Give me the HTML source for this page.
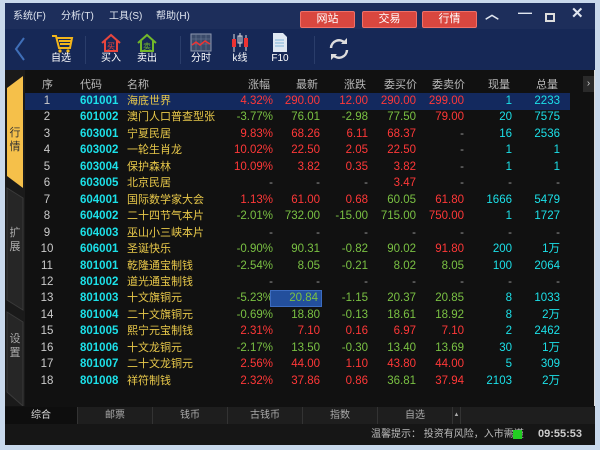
<!DOCTYPE html>
<html><head><meta charset="utf-8"><style>
*{margin:0;padding:0;box-sizing:border-box}
body{width:600px;height:450px;overflow:hidden;background:#c9d9ec;font-family:"Liberation Sans","Noto Sans CJK SC",sans-serif;position:relative}
.a{position:absolute}
#win{left:5px;top:3px;width:590px;height:442px;background:#111}
#menu{left:5px;top:3px;width:590px;height:26px;background:#1d2e5b}
#menu span{position:absolute;top:7px;font-size:10px;line-height:13px;color:#e0e6f0}
.btn{position:absolute;top:8px;height:17px;width:55px;background:#d9473f;border:1px solid #f07068;color:#fff;font-size:11px;text-align:center;line-height:15px;border-radius:2px}
#tool{left:5px;top:29px;width:590px;height:41px;background:#162856}
.tl{position:absolute;top:52px;font-size:10px;line-height:13px;color:#fff;text-align:center;width:40px}
.sep{position:absolute;top:36px;width:1px;height:28px;background:#2a3d6a}
#side{left:5px;top:70px;width:20px;height:336px;background:#1a1a1a}
.hd{position:absolute;top:78px;font-size:11px;line-height:14px;color:#b8b8b8}
.row{position:absolute;left:25px;width:545px;height:17px;font-size:11.5px}
.row span{position:absolute;top:0;line-height:17px;height:17px;white-space:nowrap}
.n{left:10px;width:24px;text-align:center;color:#ccc}
.c{left:55px;color:#1ce0e8;font-weight:bold}
.m{left:102px;color:#e8c84a;font-size:11px}
.r{color:#ff3838}.g{color:#7ac143}.y{color:#1ce0e8}.d{color:#999}
#tabs{left:5px;top:407px;width:590px;height:17px;background:#1e1e1e}
#tabs div{position:absolute;top:0;height:17px;font-size:10px;color:#aaa;text-align:center;line-height:17px;border-right:1px solid #333}
#stat{left:5px;top:424px;width:590px;height:21px;background:#161616}
</style></head><body>
<div id="win" class="a"></div>
<div id="menu" class="a">
<span style="left:8px">系统(F)</span><span style="left:56px">分析(T)</span><span style="left:104px">工具(S)</span><span style="left:151px">帮助(H)</span>
<div class="btn" style="left:295px">网站</div><div class="btn" style="left:357px">交易</div><div class="btn" style="left:417px">行情</div>
<span style="left:480px;top:5px;font-size:14px;font-weight:bold">︿</span>
<span style="left:513px;top:3px;font-size:14px;font-weight:bold">—</span>
<span style="left:540px;top:10px;width:10px;height:9px;border:2px solid #ddd"></span>
<span style="left:566px;top:4px;font-size:15px;font-weight:bold">✕</span>
</div>
<div id="tool" class="a"></div>
<svg class="a" style="left:10px;top:34px" width="20" height="30"><path d="M14 4 L6 15 L14 26" stroke="#3f6fb8" stroke-width="2" fill="none"/></svg>
<svg class="a" style="left:50px;top:33px" width="24" height="20"><path d="M2 3h4l3 12h11l2-10H7M9 8h12M10 11h10" stroke="#f2b51a" stroke-width="2" fill="none"/><circle cx="10" cy="18" r="1.6" fill="#f2b51a"/><circle cx="18" cy="18" r="1.6" fill="#f2b51a"/></svg>
<div class="tl" style="left:41px">自选</div>
<div class="sep" style="left:85px"></div>
<svg class="a" style="left:100px;top:33px" width="22" height="20"><path d="M2 10L11 2L20 10M5 8v10h12V8" stroke="#e8463e" stroke-width="2" fill="none"/><text x="11" y="16" font-size="8" fill="#e8463e" text-anchor="middle">买</text></svg>
<div class="tl" style="left:91px">买入</div>
<svg class="a" style="left:136px;top:33px" width="22" height="20"><path d="M2 10L11 2L20 10M5 8v10h12V8" stroke="#72b82a" stroke-width="2" fill="none"/><text x="11" y="16" font-size="8" fill="#72b82a" text-anchor="middle">卖</text></svg>
<div class="tl" style="left:127px">卖出</div>
<div class="sep" style="left:180px"></div>
<svg class="a" style="left:190px;top:33px" width="22" height="19"><rect x="1" y="1" width="20" height="17" fill="#3a4a6a" stroke="#8d98b0"/><path d="M1 6h20M1 11h20M6 1v17M11 1v17M16 1v17" stroke="#6a7894" stroke-width=".6"/><path d="M2 12l4-3 4 3 5-4 5 3" stroke="#e33" stroke-width="1.5" fill="none"/></svg>
<div class="tl" style="left:181px">分时</div>
<svg class="a" style="left:230px;top:32px" width="20" height="21"><path d="M4 2v18M10 1v14M16 3v16" stroke="#ddd"/><rect x="2" y="7" width="4" height="8" fill="#e33"/><rect x="8" y="4" width="4" height="7" fill="none" stroke="#ddd"/><rect x="14" y="6" width="4" height="9" fill="#e33"/></svg>
<div class="tl" style="left:220px">k线</div>
<svg class="a" style="left:272px;top:32px" width="16" height="21"><path d="M1 1h10l4 4v15H1z" fill="#dfe8f2"/><path d="M3 8h9M3 11h9M3 14h9" stroke="#7fb3d8"/></svg>
<div class="tl" style="left:260px">F10</div>
<div class="sep" style="left:314px"></div>
<svg class="a" style="left:328px;top:38px" width="22" height="22"><path d="M3 10a8 8 0 0 1 14-5M19 12a8 8 0 0 1-14 5" stroke="#ddd" stroke-width="2.5" fill="none"/><path d="M13 6h6V0z" fill="#ddd"/><path d="M9 16H3v6z" fill="#ddd"/></svg>
<div id="side" class="a"></div>
<svg class="a" style="left:6px;top:72px" width="19" height="334"><path d="M1 16L17 4V116L1 104z" fill="#f5c04a"/><path d="M1 116L17 126V238L1 228z M1 240L17 250V334L1 320z" fill="#262626" stroke="#3a3a3a"/><text x="9" y="64" font-size="11" fill="#333" text-anchor="middle">行</text><text x="9" y="78" font-size="11" fill="#333" text-anchor="middle">情</text><text x="9" y="164" font-size="11" fill="#aaa" text-anchor="middle">扩</text><text x="9" y="178" font-size="11" fill="#aaa" text-anchor="middle">展</text><text x="9" y="270" font-size="11" fill="#aaa" text-anchor="middle">设</text><text x="9" y="284" font-size="11" fill="#aaa" text-anchor="middle">置</text></svg>
<div class="hd" style="left:42px">序</div><div class="hd" style="left:80px">代码</div><div class="hd" style="left:127px">名称</div>
<div class="hd" style="left:248px">涨幅</div><div class="hd" style="left:296px">最新</div><div class="hd" style="left:344px">涨跌</div><div class="hd" style="left:384px">委买价</div><div class="hd" style="left:432px">委卖价</div><div class="hd" style="left:488px">现量</div><div class="hd" style="left:536px">总量</div>
<div class="a" style="left:583px;top:76px;width:11px;height:16px;background:#2a2a2a;color:#ccc;font-size:10px;text-align:center;line-height:16px">›</div>
<div class="a" style="left:594px;top:70px;width:1px;height:336px;background:#ddd"></div>
<div id="rows"></div>
<div id="tabs" class="a">
<div style="left:0;width:73px;background:#0e0e0e;color:#ddd">综合</div><div style="left:73px;width:75px">邮票</div><div style="left:148px;width:75px">钱币</div><div style="left:223px;width:75px">古钱币</div><div style="left:298px;width:75px">指数</div><div style="left:373px;width:75px">自选</div><div style="left:448px;width:8px;font-size:6px">▲</div>
</div>
<div id="stat" class="a">
<span class="a" style="left:366px;top:4px;font-size:10px;line-height:13px;color:#bbb">温馨提示：  投资有风险，入市需谨</span>
<span class="a" style="left:508px;top:6px;width:9px;height:9px;background:#2c2"></span>
<span class="a" style="left:533px;top:4px;font-size:11px;line-height:13px;color:#ccc;font-weight:bold">09:55:53</span>
</div>
<script>
var D=[
["601001","海底世界","r4.32%","r290.00","r12.00","r290.00","r299.00","y1","y2233"],
["601002","澳门人口普查型张","g-3.77%","g76.01","g-2.98","g77.50","r79.00","y20","y7575"],
["603001","宁夏民居","r9.83%","r68.26","r6.11","r68.37","d-","y16","y2536"],
["603002","一轮生肖龙","r10.02%","r22.50","r2.05","r22.50","d-","y1","y1"],
["603004","保护森林","r10.09%","r3.82","r0.35","r3.82","d-","y1","y1"],
["603005","北京民居","d-","d-","d-","r3.47","d-","d-","d-"],
["604001","国际数学家大会","r1.13%","r61.00","r0.68","g60.05","r61.80","y1666","y5479"],
["604002","二十四节气本片","g-2.01%","g732.00","g-15.00","g715.00","r750.00","y1","y1727"],
["604003","巫山小三峡本片","d-","d-","d-","d-","d-","d-","d-"],
["606001","圣诞快乐","g-0.90%","g90.31","g-0.82","g90.02","r91.80","y200","y1万"],
["801001","乾隆通宝制钱","g-2.54%","g8.05","g-0.21","g8.02","g8.05","y100","y2064"],
["801002","道光通宝制钱","d-","d-","d-","d-","d-","d-","d-"],
["801003","十文旗铜元","g-5.23%","b20.84","g-1.15","g20.37","g20.85","y8","y1033"],
["801004","二十文旗铜元","g-0.69%","g18.80","g-0.13","g18.61","g18.92","y8","y2万"],
["801005","熙宁元宝制钱","r2.31%","r7.10","r0.16","r6.97","r7.10","y2","y2462"],
["801006","十文龙铜元","g-2.17%","g13.50","g-0.30","g13.40","g13.69","y30","y1万"],
["801007","二十文龙铜元","r2.56%","r44.00","r1.10","r43.80","r44.00","y5","y309"],
["801008","祥符制钱","r2.32%","r37.86","r0.86","g36.81","r37.94","y2103","y2万"]];
var R=[273,320,368,416,464,512,560],h="";
D.forEach(function(d,i){var t=93+i*16.45;
h+='<div class="row" style="top:'+t+'px;'+(i==0?'background:#13295e;':'')+'"><span class="n">'+(i+1)+'</span><span class="c">'+d[0]+'</span><span class="m">'+d[1]+'</span>';
for(var j=0;j<7;j++){var v=d[j+2],k=v[0],s=v.slice(1),st='right:'+(570-R[j])+'px;';
if(k=='b'){k='g';st+='background:#234f9c;border:1px solid #3c6cc0;padding:0 3px 0 18px;line-height:15px;right:'+(570-R[j]-2)+'px;';}
h+='<span class="'+k+'" style="'+st+'">'+s+'</span>';}
h+='</div>';});
document.getElementById('rows').innerHTML=h;
</script>
</body></html>
